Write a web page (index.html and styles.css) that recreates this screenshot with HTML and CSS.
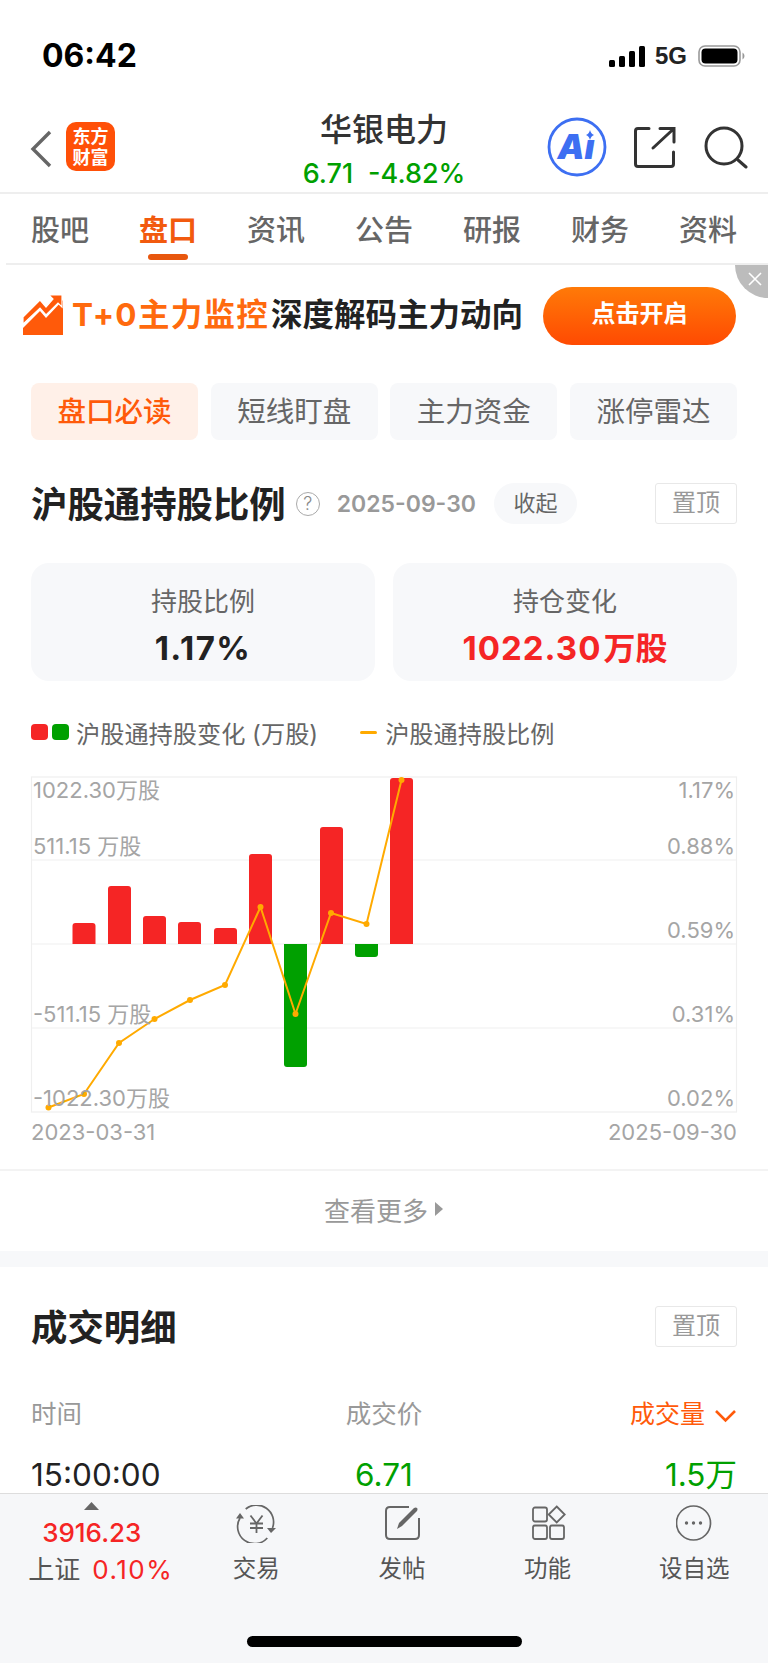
FILE: index.html
```html
<!DOCTYPE html>
<html lang="zh-CN">
<head>
    <meta charset="UTF-8">
    <meta name="viewport" content="width=device-width, initial-scale=1.0">
    <title>华银电力</title>
    <link rel="stylesheet" href="styles.css">
</head>
<body>
<div class="page">
    <div class="scroll">
        <!-- 状态栏 -->
        <div class="status">
            <span class="clock">06:42</span>
            <div class="status-right">
                <svg width="36" height="21" viewBox="0 0 36 21"><rect x="0" y="14" width="6" height="7" rx="1.5"/><rect x="10" y="10" width="6" height="11" rx="1.5"/><rect x="20" y="5" width="6" height="16" rx="1.5"/><rect x="30" y="0" width="6" height="21" rx="1.5"/></svg>
                <span class="net">5G</span>
                <svg width="47" height="22" viewBox="0 0 47 22"><rect x="1" y="1" width="41" height="20" rx="6" fill="none" stroke="#999" stroke-width="1.6"/><rect x="3.5" y="3.5" width="36" height="15" rx="4" fill="#000"/><path d="M44.5 7.5q2 1 2 3.5t-2 3.5z" fill="#999"/></svg>
            </div>
        </div>

        <!-- 顶部导航 -->
        <div class="nav">
            <div class="nav-left">
                <svg class="back" width="22" height="38" viewBox="0 0 22 38"><path d="M20 2L3 19l17 17" fill="none" stroke="#666" stroke-width="3.4"/></svg>
                <div class="logo"><span>东方</span><span>财富</span></div>
            </div>
            <div class="nav-title">
                <div class="stock-name">华银电力</div>
                <div class="stock-price"><span>6.71</span><span>-4.82%</span></div>
            </div>
            <div class="nav-right">
                <svg class="ai" width="60" height="60" viewBox="0 0 60 60">
                    <circle cx="30" cy="30" r="28" fill="#fff" stroke="#3d6ff2" stroke-width="2.8"/>
                    <text x="29" y="42" class="ai-text">Aı</text>
                    <path d="M43 13q1 4 4 5q-3 1-4 5q-1-4-4-5q3-1 4-5z" fill="#3d6ff2"/>
                </svg>
                <svg width="44" height="42" viewBox="0 0 44 42" fill="none" stroke="#333" stroke-width="3" stroke-linecap="round">
                    <path d="M16 2.5H5Q2.5 2.5 2.5 5V38Q2.5 40.5 5 40.5H38Q40.5 40.5 40.5 38V26"/>
                    <path d="M20 22L41 2.5M27 2.5H41V16"/>
                </svg>
                <svg width="44" height="44" viewBox="0 0 44 44" fill="none" stroke="#333" stroke-width="3" stroke-linecap="round">
                    <circle cx="20" cy="20" r="18"/>
                    <path d="M34 34l8 7"/>
                </svg>
            </div>
        </div>

        <!-- 标签栏 -->
        <div class="tabs">
            <span class="tab">股吧</span>
            <span class="tab active">盘口</span>
            <span class="tab">资讯</span>
            <span class="tab">公告</span>
            <span class="tab">研报</span>
            <span class="tab">财务</span>
            <span class="tab">资料</span>
        </div>

        <!-- 广告条 -->
        <div class="banner">
            <svg class="banner-icon" width="41" height="40" viewBox="0 0 41 40">
                <path d="M0 40V33L17 16l6 7L40 5V40z" fill="#ff5a0a"/>
                <path d="M0 22L17 5l6 7 7-8-4-4h13v12l-4-4-12 12-6-7L0 29z" fill="#ff5a0a" stroke="#fff" stroke-width="1.2"/>
            </svg>
            <span class="banner-text"><span class="hot">T+0主力监控</span>深度解码主力动向</span>
            <span class="banner-btn">点击开启</span>
            <span class="banner-close"><svg width="14" height="14" viewBox="0 0 14 14"><path d="M1 1l12 12M13 1L1 13" stroke="#fff" stroke-width="1.6"/></svg></span>
        </div>

        <!-- 子标签 -->
        <div class="pills">
            <span class="pill active">盘口必读</span>
            <span class="pill">短线盯盘</span>
            <span class="pill">主力资金</span>
            <span class="pill">涨停雷达</span>
        </div>

        <!-- 沪股通持股比例 -->
        <div class="section-head">
            <h2>沪股通持股比例</h2>
            <span class="help">?</span>
            <span class="date">2025-09-30</span>
            <span class="fold">收起</span>
            <span class="pin">置顶</span>
        </div>

        <div class="cards">
            <div class="card">
                <div class="card-label">持股比例</div>
                <div class="card-value">1.17%</div>
            </div>
            <div class="card">
                <div class="card-label">持仓变化</div>
                <div class="card-value up">1022.30<span class="unit">万股</span></div>
            </div>
        </div>

        <div class="legend">
            <span class="swatch red"></span>
            <span class="swatch green"></span>
            <span class="legend-text">沪股通持股变化 (万股)</span>
            <span class="legend-line"></span>
            <span class="legend-text">沪股通持股比例</span>
        </div>

        <svg class="chart" width="768" height="375" viewBox="0 770 768 375">
            <rect x="31.5" y="777" width="705" height="335" fill="none" stroke="#efefef" stroke-width="1.2"/>
            <path d="M31 860H737M31 944H737M31 1028H737" stroke="#efefef" stroke-width="1.2"/>

            <g fill="#f52525">
                <path d="M72.5 944V926q0-3 3-3h17q3 0 3 3v18z"/>
                <path d="M108 944V889q0-3 3-3h17q3 0 3 3v55z"/>
                <path d="M143 944V919q0-3 3-3h17q3 0 3 3v25z"/>
                <path d="M178 944V925q0-3 3-3h17q3 0 3 3v19z"/>
                <path d="M214 944V931q0-3 3-3h17q3 0 3 3v13z"/>
                <path d="M249 944V857q0-3 3-3h17q3 0 3 3v87z"/>
                <path d="M320 944V830q0-3 3-3h17q3 0 3 3v114z"/>
                <path d="M390 944V781q0-3 3-3h17q3 0 3 3v163z"/>
            </g>
            <g fill="#00a000">
                <path d="M284 944V1064q0 3 3 3h17q3 0 3-3V944z"/>
                <path d="M355 944V954q0 3 3 3h17q3 0 3-3V944z"/>
            </g>

            <polyline points="48.5,1107.5 84,1094 119,1043 154.5,1019 190,1000 225,985 260.5,907 295.5,1014 331,913 366.5,924 401.5,780" fill="none" stroke="#ffaa00" stroke-width="2"/>
            <g fill="#ffaa00">
                <circle cx="48.5" cy="1107.5" r="3"/>
                <circle cx="84" cy="1094" r="3"/>
                <circle cx="119" cy="1043" r="3"/>
                <circle cx="154.5" cy="1019" r="3"/>
                <circle cx="190" cy="1000" r="3"/>
                <circle cx="225" cy="985" r="3"/>
                <circle cx="260.5" cy="907" r="3"/>
                <circle cx="295.5" cy="1014" r="3"/>
                <circle cx="331" cy="913" r="3"/>
                <circle cx="366.5" cy="924" r="3"/>
                <circle cx="401.5" cy="780" r="3"/>
            </g>

            <text class="axis" x="33" y="798">1022.30万股</text>
            <text class="axis" x="33" y="854">511.15 万股</text>
            <text class="axis" x="33" y="1022">-511.15 万股</text>
            <text class="axis" x="33" y="1106">-1022.30万股</text>
            <text class="axis end" x="735" y="798">1.17%</text>
            <text class="axis end" x="735" y="854">0.88%</text>
            <text class="axis end" x="735" y="938">0.59%</text>
            <text class="axis end" x="735" y="1022">0.31%</text>
            <text class="axis end" x="735" y="1106">0.02%</text>
            <text class="axis" x="31" y="1140">2023-03-31</text>
            <text class="axis end" x="737" y="1140">2025-09-30</text>
        </svg>

        <div class="more">
            <span>查看更多</span>
            <svg width="9" height="14" viewBox="0 0 9 14"><path d="M0 0l8 7-8 7z" fill="#999"/></svg>
        </div>
        <div class="gap"></div>

        <!-- 成交明细 -->
        <div class="section-head deal-head">
            <h2>成交明细</h2>
            <span class="pin">置顶</span>
        </div>
        <div class="deal-row deal-title">
            <span>时间</span>
            <span>成交价</span>
            <span class="sort">成交量<svg width="23" height="14" viewBox="0 0 23 14"><path d="M2 2l9.5 9.5L21 2" fill="none" stroke="#ff5a0a" stroke-width="2.6"/></svg></span>
        </div>
        <div class="deal-row deal-data">
            <span>15:00:00</span>
            <span class="down">6.71</span>
            <span class="down">1.5万</span>
        </div>
    </div>

    <!-- 底部工具栏 -->
    <div class="bottom">
        <div class="toolbar">
            <div class="index">
                <svg width="15" height="8" viewBox="0 0 15 8"><path d="M7.5 0L15 8H0z" fill="#666"/></svg>
                <div class="index-num">3916.23</div>
                <div class="index-name">上证<span>0.10%</span></div>
            </div>
            <div class="tool">
                <svg width="42" height="38" viewBox="0 0 42 38" fill="none" stroke="#666" stroke-width="1.7">
                    <path d="M10.7 4A17 17 0 0 1 37.5 23"/>
                    <path d="M32.3 33A17 17 0 0 1 5 13"/>
                    <path d="M36 28l-4-5h9zM5 8l-4 5.5h8z" fill="#666" stroke="none"/>
                    <path d="M15.5 10.5l6 8 6-8M15 18.5h13M15 23h13M21.5 18.5V28" stroke-width="1.8"/>
                </svg>
                <span>交易</span>
            </div>
            <div class="tool">
                <svg width="38" height="38" viewBox="0 0 38 38" fill="none">
                    <path d="M26 2H7Q3 2 3 6v24q0 4 4 4h25q4 0 4-4V13" stroke="#666" stroke-width="2"/>
                    <path d="M14 24l2-6L31 3q2-1 3 0t0 3L19 21z" fill="#666"/>
                </svg>
                <span>发帖</span>
            </div>
            <div class="tool">
                <svg width="38" height="38" viewBox="0 0 38 38" fill="none" stroke="#666" stroke-width="1.8">
                    <rect x="4" y="2.5" width="14" height="14" rx="2"/>
                    <path d="M27.7 1.5l8 8-8 8-8-8z"/>
                    <rect x="4" y="20.5" width="14" height="13.5" rx="2"/>
                    <rect x="21" y="20.5" width="14" height="13.5" rx="2"/>
                </svg>
                <span>功能</span>
            </div>
            <div class="tool fav">
                <svg width="36" height="38" viewBox="0 0 36 38">
                    <circle cx="17.5" cy="18" r="17" fill="none" stroke="#666" stroke-width="1.7"/>
                    <circle cx="10.5" cy="18" r="1.7" fill="#666"/><circle cx="17.5" cy="18" r="1.7" fill="#666"/><circle cx="24.5" cy="18" r="1.7" fill="#666"/>
                </svg>
                <span>设自选</span>
            </div>
        </div>
        <div class="home-bar"></div>
    </div>
</div>
</body>
</html>
```

FILE: styles.css
```css
* {
    box-sizing: border-box;
}
body {
    margin: 0;
    background: #fff;
    font-family: Inter, "Noto Sans CJK SC", sans-serif;
    color: #222;
}
.page {
    width: 768px;
    height: 1663px;
    display: flex;
    flex-direction: column;
    overflow: hidden;
}
.scroll {
    height: 1493px;
    flex-shrink: 0;
}

/* 状态栏 */
.status {
    height: 100px;
    padding: 36px 23px 0 42px;
    display: flex;
    justify-content: space-between;
    align-items: flex-start;
}
.clock {
    font-size: 32px;
    font-weight: 700;
    line-height: 40px;
    color: #000;
}
.status-right {
    display: flex;
    align-items: center;
    height: 40px;
    gap: 10px;
}
.net {
    font-family: "Liberation Sans", sans-serif;
    font-size: 24px;
    font-weight: 700;
    color: #222;
    width: 33px;
}

/* 顶部导航 */
.nav {
    height: 94px;
    border-bottom: 2px solid #eee;
    display: flex;
    justify-content: space-between;
    position: relative;
}
.nav-left {
    display: flex;
    align-items: flex-start;
    padding: 22px 0 0 30px;
    gap: 14px;
}
.back {
    margin-top: 8px;
}
.logo {
    width: 49px;
    height: 49px;
    background: #ff5008;
    border-radius: 10px;
    color: #fff;
    font-size: 18px;
    line-height: 21px;
    font-weight: 700;
    display: flex;
    flex-direction: column;
    align-items: center;
    justify-content: center;
}
.nav-title {
    position: absolute;
    left: 0;
    right: 0;
    top: 8px;
    text-align: center;
    pointer-events: none;
}
.stock-name {
    font-size: 32px;
    line-height: 44px;
    font-weight: 500;
    color: #333;
}
.stock-price {
    margin-top: 2px;
    display: flex;
    justify-content: center;
    gap: 15px;
    font-size: 27px;
    line-height: 40px;
    font-weight: 500;
    color: #00a000;
}
.nav-right {
    display: flex;
    align-items: flex-start;
    padding: 18px 20px 0 0;
    gap: 27px;
}
.nav-right svg {
    margin-top: 8px;
}
.nav-right .ai {
    margin-top: -1px;
    margin-right: -1px;
}
.ai-text {
    font-family: Inter, sans-serif;
    font-size: 34px;
    font-weight: 900;
    font-style: italic;
    fill: #3d6ff2;
    text-anchor: middle;
}

/* 标签栏 */
.tabs {
    height: 71px;
    margin-left: 6px;
    padding: 0 31px 0 25px;
    border-bottom: 2px solid #eee;
    display: flex;
    justify-content: space-between;
    align-items: flex-start;
}
.tab {
    position: relative;
    height: 68px;
    font-size: 29px;
    line-height: 74px;
    color: #666;
    font-weight: 500;
}
.tab.active {
    color: #f25a0e;
    font-weight: 700;
}
.tab.active::after {
    content: "";
    position: absolute;
    left: 9px;
    right: 9px;
    top: 60px;
    height: 6px;
    background: #e8570e;
    border-radius: 3px;
}

/* 广告条 */
.banner {
    position: relative;
    height: 118px;
    padding: 22px 32px 0 23px;
    display: flex;
    align-items: flex-start;
}
.banner-icon {
    margin-top: 8px;
}
.banner-text {
    margin-left: 8px;
    margin-top: 1px;
    font-size: 31.5px;
    line-height: 54px;
    font-weight: 700;
    color: #222;
    white-space: nowrap;
    flex: 1;
}
.banner-text .hot {
    color: #ff6a0e;
    margin-right: 2px;
    letter-spacing: 1.3px;
}
.banner-btn {
    width: 193px;
    height: 58px;
    border-radius: 29px;
    background: linear-gradient(180deg, #ff7a08, #ff4a02);
    color: #fff;
    font-size: 24px;
    font-weight: 700;
    line-height: 54px;
    text-align: center;
}
.banner-close {
    position: absolute;
    right: 0;
    top: 0;
    width: 33px;
    height: 33px;
    background: #bcbcbc;
    border-bottom-left-radius: 33px;
    display: flex;
    align-items: center;
    justify-content: center;
    padding: 0 0 6px 6px;
}

/* 子标签 */
.pills {
    padding: 0 31px;
    display: grid;
    grid-template-columns: repeat(4, 167px);
    justify-content: space-between;
}
.pill {
    height: 57px;
    line-height: 58px;
    text-align: center;
    background: #f7f8fa;
    border-radius: 8px;
    font-size: 28.5px;
    color: #666;
}
.pill.active {
    background: #fff0e8;
    color: #ff5a0a;
    font-weight: 500;
}

/* 标题 */
.section-head {
    margin-top: 43px;
    padding: 0 31px;
    height: 41px;
    display: flex;
    align-items: center;
}
.section-head h2 {
    margin: 0;
    padding-top: 3px;
    font-size: 36.4px;
    font-weight: 700;
    color: #222;
    line-height: 41px;
}
.help {
    margin-left: 10px;
    width: 24px;
    height: 24px;
    border: 1.5px solid #aaa;
    border-radius: 50%;
    font-size: 18px;
    font-weight: 300;
    line-height: 21px;
    text-align: center;
    color: #888;
}
.date {
    margin-left: 17px;
    font-size: 23px;
    font-weight: 600;
    color: #999;
}
.fold {
    margin-left: 18px;
    width: 83px;
    height: 41px;
    border-radius: 21px;
    background: #f7f8fa;
    font-size: 22px;
    line-height: 40px;
    text-align: center;
    color: #666;
}
.pin {
    margin-left: auto;
    width: 82px;
    height: 41px;
    border: 1.5px solid #e8e8e8;
    border-radius: 3px;
    font-size: 24px;
    line-height: 37px;
    text-align: center;
    color: #999;
}

/* 数据卡片 */
.cards {
    margin-top: 39px;
    padding: 0 31px;
    display: grid;
    grid-template-columns: 344px 344px;
    justify-content: space-between;
}
.card {
    height: 118px;
    border-radius: 18px;
    background: #f7f8fa;
    text-align: center;
    padding-top: 21px;
}
.card-label {
    font-size: 26px;
    line-height: 36px;
    color: #666;
}
.card-value {
    margin-top: 6px;
    font-size: 33px;
    line-height: 44px;
    font-weight: 700;
    letter-spacing: 1.5px;
    color: #222;
}
.card-value.up {
    letter-spacing: 1px;
    color: #f52525;
}
.unit {
    margin-left: 2px;
    font-size: 32px;
    letter-spacing: 0;
}

/* 图例 */
.legend {
    margin-top: 35px;
    padding-left: 31px;
    height: 32px;
    display: flex;
    align-items: center;
}
.swatch {
    width: 17px;
    height: 16px;
    border-radius: 4px;
    margin-right: 4px;
}
.swatch.red {
    background: #f52525;
}
.swatch.green {
    background: #00a000;
}
.legend-text {
    margin-left: 3px;
    font-size: 24.2px;
    color: #666;
    white-space: nowrap;
}
.legend-line {
    width: 17px;
    height: 3px;
    background: #ffaa00;
    border-radius: 2px;
    margin: 0 5px 0 42px;
}

/* 图表 */
.chart {
    display: block;
    margin-top: 22px;
}
.axis {
    font-size: 22px;
    fill: #a5a5a5;
}
.axis.end {
    text-anchor: end;
}

.more {
    margin-top: 24px;
    height: 82px;
    border-top: 2px solid #f3f3f3;
    display: flex;
    align-items: center;
    justify-content: center;
    gap: 7px;
    font-size: 26px;
    color: #999;
    padding-bottom: 4px;
}
.gap {
    height: 16px;
    background: #f7f8fa;
}
.deal-head {
    margin-top: 39px;
}
.deal-row {
    padding: 0 31px;
    display: grid;
    grid-template-columns: 1fr 1fr 1fr;
}
.deal-row span:nth-child(2) {
    text-align: center;
}
.deal-row span:nth-child(3) {
    text-align: right;
}
.deal-title {
    margin-top: 49px;
    font-size: 25.5px;
    line-height: 36px;
    color: #999;
}
.deal-title .sort {
    color: #ff5a0a;
    font-size: 25px;
}
.sort svg {
    margin-left: 9px;
}
.deal-data {
    margin-top: 25px;
    font-size: 31.5px;
    line-height: 35px;
    color: #222;
}
.deal-data .down {
    color: #00a000;
}

/* 底部工具栏 */
.bottom {
    flex: 1;
    background: #f6f7f9;
    border-top: 1.5px solid #ddd;
    position: relative;
}
.toolbar {
    display: flex;
    align-items: flex-start;
}
.index {
    width: 184px;
    padding-top: 8px;
    display: flex;
    flex-direction: column;
    align-items: center;
}
.index svg {
    display: block;
    margin-right: 1px;
}
.index-num {
    margin-top: 8px;
    font-size: 26px;
    line-height: 30px;
    color: #f52525;
    font-weight: 500;
}
.index-name {
    margin-top: 4px;
    margin-left: 18px;
    font-size: 26px;
    line-height: 36px;
    color: #555;
    white-space: nowrap;
}
.index-name span {
    margin-left: 12px;
    letter-spacing: 1.5px;
    color: #f52525;
}
.tool {
    width: 146px;
    padding-top: 11px;
    display: flex;
    flex-direction: column;
    align-items: center;
    font-size: 23.5px;
    line-height: 34px;
    color: #555;
}
.tool svg {
    display: block;
    margin-bottom: 9px;
}
.tool.fav {
    width: 148px;
}
.home-bar {
    position: absolute;
    left: 247px;
    top: 142px;
    width: 275px;
    height: 11px;
    border-radius: 6px;
    background: #000;
}
```
